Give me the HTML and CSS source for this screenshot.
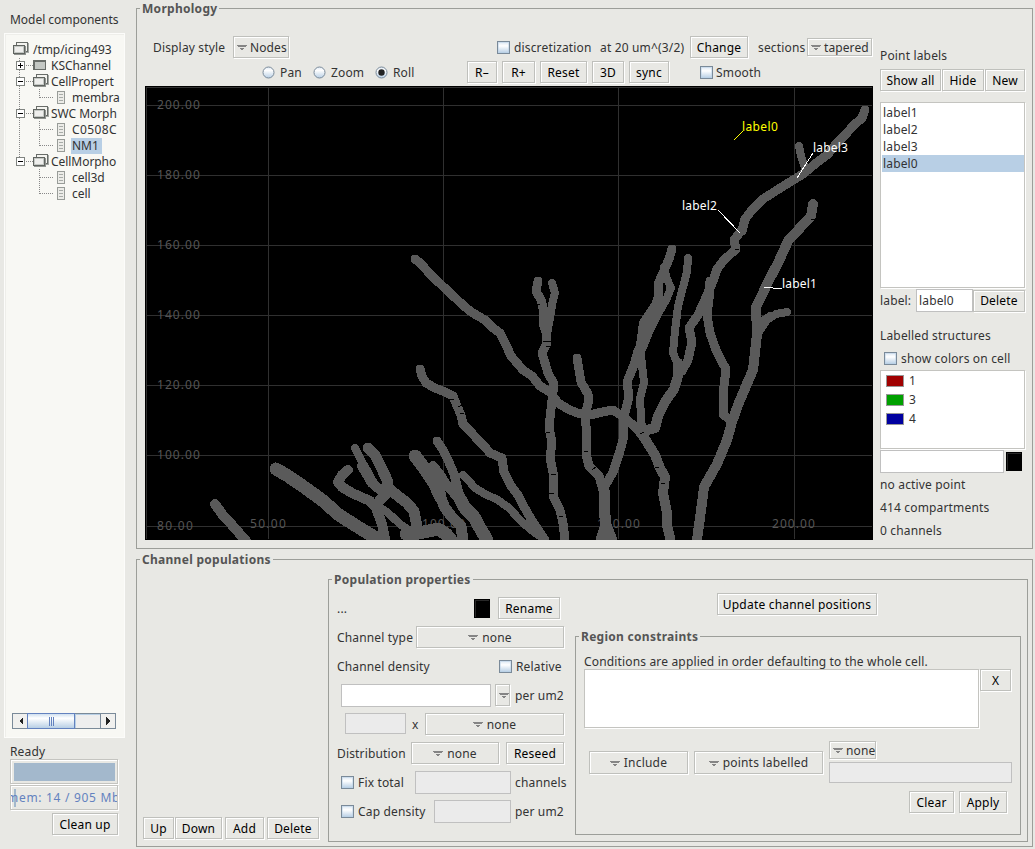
FILE: index.html
```html
<!DOCTYPE html>
<html lang="en">
<head>
<meta charset="utf-8">
<title>Morphology</title>
<link rel="stylesheet" href="styles.css">
</head>
<body>
<svg width="0" height="0" class="defs" aria-hidden="true">
  <defs>
    <linearGradient id="metal" x1="0" y1="0" x2="0" y2="1"><stop offset="0" stop-color="#dde8f3"/><stop offset=".3" stop-color="#fff"/><stop offset="1" stop-color="#b8cfe5"/></linearGradient>
    <symbol id="folder" viewBox="0 0 16 14"><path d="M3.500 3V.5h11v9H12" fill="#f4f4f0" stroke="#686c68"/><path d="M15.500 1v9.500H13" fill="none" stroke="#a4a8a4"/><path d="M.5 3.500h11v8H.5z" fill="#eeeeec" stroke="#606460"/><path d="M1.500 4.500h9v6h-9z" fill="none" stroke="#c4c8c4"/><path d="M12.500 4v8.500H1" fill="none" stroke="#909490"/></symbol>
    <symbol id="closed" viewBox="0 0 14 11"><path d="M1 1h11.500v8.500H1z" fill="#c4c8c4" stroke="#686c68" stroke-width="1.500"/></symbol>
    <symbol id="leaf" viewBox="0 0 9 13"><path d="M.5.5h7v12h-7z" fill="#ecece8" stroke="#989c98"/><path d="M2 3.500h4M2 6.500h4M2 9.500h4" stroke="#a8aca8"/></symbol>
    <symbol id="plus" viewBox="0 0 9 9"><path d="M.5.5h8v8h-8z" fill="#fff" stroke="#808480"/><path d="M2 4.500h5M4.500 2v5" stroke="#000"/></symbol>
    <symbol id="minus" viewBox="0 0 9 9"><path d="M.5.5h8v8h-8z" fill="#fff" stroke="#808480"/><path d="M2 4.500h5" stroke="#000"/></symbol>
    <symbol id="arrow" viewBox="0 0 10 5"><path d="M0 0h10v1H9v1H1V1H0zM3 3h4v1H6v1H4V4H3z" fill="#858585"/></symbol>
    <symbol id="radio" viewBox="0 0 13 13"><circle cx="6.500" cy="6.500" r="5.500" fill="url(#metal)" stroke="#7a8a99"/></symbol>
  </defs>
</svg>
<div class="app">
  <aside class="side">
    <div class="side-title">Model components</div>
    <div class="tree-panel">
      <div class="tree">
        <svg class="lines" width="50" height="154" viewBox="0 0 50 154"><path d="M7.500 16v104M14 23.500h7M14 39.500h7M14 71.500h7M14 119.500h7M27.500 47v10M27.500 55.500h14M27.500 79v26M27.500 87.500h14M27.500 103.500h14M27.500 127v26M27.500 135.500h14M27.500 151.500h14" /></svg>
        <div class="node"><svg class="folder"><use href="#folder"/></svg><span>/tmp/icing493</span></div>
        <div class="node l1"><svg class="box"><use href="#plus"/></svg><svg class="closed"><use href="#closed"/></svg><span>KSChannel</span></div>
        <div class="node l1"><svg class="box"><use href="#minus"/></svg><svg class="folder"><use href="#folder"/></svg><span>CellPropert</span></div>
        <div class="node l2"><svg class="leaf"><use href="#leaf"/></svg><span>membra</span></div>
        <div class="node l1"><svg class="box"><use href="#minus"/></svg><svg class="folder"><use href="#folder"/></svg><span>SWC Morph</span></div>
        <div class="node l2"><svg class="leaf"><use href="#leaf"/></svg><span class="wide">C0508C</span></div>
        <div class="node l2"><svg class="leaf"><use href="#leaf"/></svg><span class="picked">NM1</span></div>
        <div class="node l1"><svg class="box"><use href="#minus"/></svg><svg class="folder"><use href="#folder"/></svg><span>CellMorpho</span></div>
        <div class="node l2"><svg class="leaf"><use href="#leaf"/></svg><span>cell3d</span></div>
        <div class="node l2"><svg class="leaf"><use href="#leaf"/></svg><span>cell</span></div>
      </div>
      <div class="scroll"><span class="sb"><svg width="5" height="8"><path d="M5 0v8L1 4z"/></svg></span><span class="thumb"><i></i><i></i><i></i></span><span class="track"></span><span class="sb"><svg width="5" height="8"><path d="M0 0v8l4-4z"/></svg></span></div>
    </div>
    <div class="ready">Ready</div>
    <div class="meter"><div class="full"></div></div>
    <div class="meter mem"><div class="bit"></div><span>mem: 14 / 905 Mb</span></div>
    <div class="btn cleanup">Clean up</div>
  </aside>
  <main class="main">
    <section class="group morph">
      <h2 class="legend">Morphology</h2>
      <div class="morph-body">
        <div class="view">
          <div class="row bar1">
            <span>Display style</span><div class="btn menu tight w56"><svg class="arrow"><use href="#arrow"/></svg>Nodes</div>
            <i class="check"></i><span>discretization</span><span>at 20 um^(3/2)</span><div class="btn w58">Change</div><span>sections</span><div class="btn menu tight short w65"><svg class="arrow"><use href="#arrow"/></svg>tapered</div>
          </div>
          <div class="row bar2">
            <svg class="radio"><use href="#radio"/></svg><span>Pan</span><svg class="radio"><use href="#radio"/></svg><span>Zoom</span><svg class="radio"><use href="#radio"/><circle cx="6.500" cy="6.500" r="3.200" fill="#222"/></svg><span>Roll</span>
            <div class="btn w30">R–</div><div class="btn w33">R+</div><div class="btn w47">Reset</div><div class="btn w32">3D</div><div class="btn w40">sync</div><i class="check"></i><span>Smooth</span>
          </div>
          <svg class="canvas" viewBox="145 86 728 454" width="728" height="454">
            <path d="M145 86h728v454H145z"/>
            <path class="grid" d="M146.500 539V87.500H872M268.500 88v451M443.500 88v451M618.500 88v451M794.500 88v451M147 105.500h725M147 175.500h725M147 245.500h725M147 315.500h725M147 385.500h725M147 455.500h725M147 526.500h725"/>
            <g class="tick">
              <text x="157" y="109" textLength="43">200.00</text><text x="157" y="179" textLength="43">180.00</text><text x="157" y="249" textLength="43">160.00</text><text x="157" y="319" textLength="43">140.00</text><text x="157" y="389" textLength="43">120.00</text><text x="157" y="459" textLength="43">100.00</text><text x="157" y="530" textLength="36">80.00</text>
              <text x="250" y="528" textLength="36">50.00</text><text x="422" y="528" textLength="43">100.00</text><text x="597" y="528" textLength="43">150.00</text><text x="772" y="528" textLength="43">200.00</text>
            </g>
            <g class="cell">
              <path d="M415 259L420 263L432 276L450 293L465 307L473 313L485 320L493 328L500 333L506 345L511 356L523 370L532 376L540 386L550 392L558 403L568 409L577 413L590 415L602 412L613 410L622 416L633 425L643 435"/>
              <path class="w9" d="M638 429L645 439L655 455L660 468L665 477L663 493L667 513L667 525L670 538"/>
              <path d="M420 369L422 376L426 383L435 388L445 392L453 396L457 406L461 415L463 424L470 431L478 440L485 447L490 453L502 458L504 472L511 486L518 495L523 505L531 519L545 540"/>
              <path class="w7" d="M463 475L468 480L475 488L485 494L498 500L509 508L520 520L530 529L545 540"/>
              <path d="M437 441L443 450L448 460L454 474L457 486L462 503"/>
              <path class="w12" d="M460 499L465 508L474 517L480 528L487 540"/>
              <path class="w9" d="M433 466L440 475L445 483L454 493L463 504"/>
              <path class="w12" d="M415 456L422 465L435 484L440 496"/>
              <path class="w10" d="M435 484L440 496L445 508L452 517L461 526L463 540"/>
              <path class="w12" d="M276 469L288 476L304 487L322 500L339 515L358 527L376 538"/>
              <path class="w9" d="M215 504L222 514L232 525L246 541"/>
              <path class="w7" d="M355 448L361 460L368 472L375 485L383 494"/>
              <path class="w10" d="M368 448L375 455L382 469L388 482L387 493L380 500"/>
              <path class="w9" d="M362 466L372 483L383 492"/>
              <path class="w9" d="M348 470L342 475L338 482L342 487L352 493L370 501L376 508L382 524L385 539"/>
              <path class="w10" d="M388 488L398 496L407 503L414 511L417 527"/>
              <path class="w7" d="M376 505L387 512L400 524L413 533"/>
              <path class="w12" d="M406 534L419 533L438 529L446 534L451 540"/>
              <path d="M538 281L536 291L541 300L544 312L543 323L546 332L547 343L542 353L548 373L554 384L552 400L549 427L552 443L550 457L554 477L553 496L560 510L563 523L565 540"/>
              <path class="w7" d="M552 283L555 293L552 305L550 318L547 334"/>
              <path d="M577 358L579 370L581 382L588 394L588 404L585 415L587 437L586 454L589 466L599 476L603 490L604 509"/>
              <path class="w10" d="M604 490L604 506L606 525L601 540M604 510L606 525L612 540"/>
              <path d="M672 249L669 259L663 273L658 284L658 298L650 324L645 338L638 351L634 365L627 382L629 396L624 417L623 440L619 454L613 472L605 486"/>
              <path class="w7" d="M664 267L667 279L671 288L666 300L658 314L650 330L641 352"/>
              <path class="w7" d="M656 303L643 323L640 345L642 365L644 382L640 399L641 416L642 430"/>
              <path class="w7" d="M688 258L687 272L683 287L678 306L675 331L673 353L678 365"/>
              <path class="w9" d="M678 363L678 376L674 389L665 402L658 416L655 428L643 431"/>
              <path d="M865 110L862 118L854 125L844 136L836 144L828 154L815 164L803 174L785 185L763 199L752 210L745 219L742 231"/>
              <path d="M741 231L734 240L736 249L724 260L717 269L713 281L704 302L698 315L689 328L692 342L688 360L682 371"/>
              <path class="w7" d="M799 146L801 156L805 168"/>
              <path d="M710 281L709 299L707 315L710 333L716 350L722 362L726 369L724 386L723 414L731 421"/>
              <path class="w9" d="M813 204L811 216L800 228L788 241L778 263L768 282L761 297L756 307L757 334L753 370L746 386L738 405L732 422L727 440L717 464L704 487L702 503L697 540"/>
              <path class="w7" d="M787 312L776 314L767 320L759 332M770 316L759 324"/>
            </g>
            <path class="nick" d="M543 341h8M546 346h5M536 304h4M546 432h4M551 474h5M549 493h5M559 516h4M584 451h4M592 470l4-3M655 467h4M661 483h4M735 249h4M811 219h4M640 434l4-2M533 364h4M450 399h4M458 407l4-2M460 413h4"/>
            <path class="lead" d="M764 287.500h9M773 288.500h9M718 210L740 233M813 153L797 178"/>
            <path class="lead yellow" d="M743 131L734 140"/>
            <g class="mark"><text x="782" y="288" textLength="35">label1</text><text x="682" y="210" textLength="35">label2</text><text x="813" y="152" textLength="35">label3</text><text class="yellow" x="742" y="131" textLength="36">label0</text></g>
          </svg>
        </div>
        <div class="props">
          <div class="line t1">Point labels</div>
          <div class="row three"><div class="btn">Show all</div><div class="btn">Hide</div><div class="btn">New</div></div>
          <div class="list points"><div>label1</div><div>label2</div><div>label3</div><div class="sel">label0</div></div>
          <div class="row edit"><span>label:</span><div class="field">label0</div><div class="btn">Delete</div></div>
          <div class="line t2">Labelled structures</div>
          <div class="row colors"><i class="check"></i><span>show colors on cell</span></div>
          <div class="list swatches"><div><i class="red"></i>1</div><div><i class="green"></i>3</div><div><i class="blue"></i>4</div></div>
          <div class="row pick"><div class="field"></div><i class="black"></i></div>
          <div class="line">no active point</div><div class="line">414 compartments</div><div class="line">0 channels</div>
        </div>
      </div>
    </section>
    <section class="group chan">
      <h2 class="legend">Channel populations</h2>
      <div class="chan-body">
        <div class="row actions"><div class="btn w31">Up</div><div class="btn w47">Down</div><div class="btn w39">Add</div><div class="btn w52">Delete</div></div>
        <section class="group pop">
          <h2 class="legend">Population properties</h2>
          <div class="pop-body">
            <div class="form">
              <div class="row f1"><span>...</span><i class="black"></i><div class="btn">Rename</div></div>
              <div class="row f2"><span>Channel type</span><div class="btn menu"><svg class="arrow"><use href="#arrow"/></svg>none</div></div>
              <div class="row f3"><span>Channel density</span><i class="check"></i><span>Relative</span></div>
              <div class="row f4"><div class="field"></div><div class="btn menu tight w15"><svg class="arrow"><use href="#arrow"/></svg></div><span>per um2</span></div>
              <div class="row f5"><div class="field off"></div><span>x</span><div class="btn menu"><svg class="arrow"><use href="#arrow"/></svg>none</div></div>
              <div class="row f6"><span>Distribution</span><div class="btn menu w88"><svg class="arrow"><use href="#arrow"/></svg>none</div><div class="btn">Reseed</div></div>
              <div class="row f7"><i class="check"></i><span>Fix total</span><div class="field off w96"></div><span>channels</span></div>
              <div class="row f8"><i class="check"></i><span>Cap density</span><div class="field off w77"></div><span>per um2</span></div>
            </div>
            <div class="region-col">
              <div class="btn update">Update channel positions</div>
              <section class="group region">
                <h2 class="legend">Region constraints</h2>
                <div class="line cond">Conditions are applied in order defaulting to the whole cell.</div>
                <div class="conds"><div class="list"></div><div class="btn">X</div></div>
                <div class="filters">
                  <div class="btn menu tall w99"><svg class="arrow"><use href="#arrow"/></svg>Include</div>
                  <div class="btn menu tall w129"><svg class="arrow"><use href="#arrow"/></svg>points labelled</div>
                  <div class="target"><div class="btn menu tight short w47"><svg class="arrow"><use href="#arrow"/></svg>none</div><div class="field off"></div></div>
                </div>
                <div class="final"><div class="btn w45">Clear</div><div class="btn w48">Apply</div></div>
              </section>
            </div>
          </div>
        </section>
      </div>
    </section>
  </main>
</div>
</body>
</html>
```
FILE: styles.css
```css
* { box-sizing: border-box; }
body { margin: 0; background: #e8e8e4; color: #333; font: 12px/16px "Noto Sans", "Open Sans", sans-serif; letter-spacing: .16px; white-space: nowrap; }
svg { display: block; flex: none; shape-rendering: crispEdges; }
i { display: block; flex: none; }
.defs { position: absolute; }
.app { display: flex; width: 1035px; height: 849px; overflow: hidden; }

.btn { display: flex; align-items: center; justify-content: center; height: 22px; padding-top: 1px; border: 1px solid #bfc0bc; box-shadow: inset 1px 1px #fff, 1px 1px #fff; color: #000; letter-spacing: .2px; flex: none; }
.menu { color: #333; gap: 4px; }
.tight { justify-content: flex-start; padding-left: 3px; gap: 3px; letter-spacing: .1px; }
.short { height: 18px; }
.tall { height: 23px; }
.arrow { width: 10px; height: 5px; }
.field { height: 23px; background: #fff; border: 1px solid #c0c0c0; padding: 3px 2px; }
.off { background: #ebebeb; height: 21px; }
.list { background: #fff; border: 1px solid #c4c4c0; box-shadow: 1px 1px #fff; }
.check { width: 13px; height: 13px; border: 1px solid #7a8a99; background: linear-gradient(#dde8f3, #fff 35%, #b8cfe5); box-shadow: inset 0 0 0 1px rgba(184, 207, 229, .5); }
.black { width: 16px; height: 19px; background: #000; border: 1px solid #000; box-shadow: inset 1px 1px #282828; }
.row { display: grid; align-items: center; }
.line { height: 23px; line-height: 23px; }
.w15 { width: 15px; } .w30 { width: 30px; } .w31 { width: 31px; } .w32 { width: 32px; } .w33 { width: 33px; } .w39 { width: 39px; } .w40 { width: 40px; } .w45 { width: 45px; } .w47 { width: 47px; } .w48 { width: 48px; } .w52 { width: 52px; } .w56 { width: 56px; } .w58 { width: 58px; } .w65 { width: 65px; } .w77 { width: 77px; } .w88 { width: 88px; } .w96 { width: 96px; } .w99 { width: 99px; } .w129 { width: 129px; }

.side { width: 136px; flex: none; display: flex; flex-direction: column; padding: 12px 0 0 4px; }
.side-title { height: 21px; padding-left: 6px; letter-spacing: -.04px; }
.tree-panel { width: 121px; height: 705px; background: #f8f8f4; border: 1px solid #fcfcfa; box-shadow: inset 1px 1px #eeeeea; display: flex; flex-direction: column; justify-content: space-between; padding: 8px 8px 8px 7px; }
.tree { position: relative; width: 107px; letter-spacing: -.05px; }
.lines { position: absolute; left: 0; top: 0; fill: none; stroke: #888; stroke-dasharray: 1 1; }
.node { position: relative; display: flex; align-items: center; height: 16px; padding-left: 1px; }
.node span { margin-left: 4px; }
.l1 { padding-left: 4px; }
.node.l1 span { margin-left: 2px; }
.l2 { padding-left: 45px; }
.node.l2 span { margin-left: 6px; }
.folder { width: 16px; height: 14px; margin-bottom: 2px; }
.box { width: 9px; height: 9px; margin-right: 8px; margin-bottom: 1px; }
.closed { width: 14px; height: 11px; margin-right: 2px; margin-bottom: 1px; }
.leaf { width: 9px; height: 13px; margin-bottom: 1px; }
.node .wide { letter-spacing: .4px; }
.node.l2 .picked { background: #b8cfe5; padding: 0 3px 0 1px; margin-left: 5px; }
.scroll { display: flex; width: 104px; height: 16px; border: 1px solid #7a8a99; }
.sb { width: 14px; display: flex; align-items: center; justify-content: center; background: #f0f0ee; fill: #222; }
.thumb { width: 48px; margin: -1px 0; border: 1px solid #6382bf; background: linear-gradient(#d0e0f0, #fff 30%, #b8cfe5); display: flex; gap: 1px; align-items: center; justify-content: center; }
.thumb i { width: 1px; height: 9px; background: #6382bf; }
.track { width: 26px; background: #eee; border-right: 1px solid #7a8a99; box-shadow: inset 1px 1px #b8cfe5; }
.ready { padding: 6px 0 0 6px; height: 21px; }
.meter { margin-left: 6px; width: 108px; height: 25px; border: 1px solid #c4c4c0; box-shadow: inset 1px 1px #fff, 1px 1px #fff; padding: 3px; overflow: hidden; flex: none; }
.full { height: 18px; width: 101px; background: #a3b8cc; }
.mem { margin-top: 1px; display: flex; align-items: center; color: #6382bf; padding: 0; letter-spacing: .7px; }
.bit { width: 2px; height: 18px; margin-left: 3px; background: #a3b8cc; flex: none; }
.mem span { margin-left: -9px; }
.cleanup { margin: 3px 0 0 48px; width: 66px; }

.main { flex: 1; padding-top: 8px; }
.group { display: flex; flex-direction: column; border: 1px solid #9c9e99; }
.legend { margin: -8px 0 0 3px; padding: 0 2px; height: 16px; width: max-content; background: #e8e8e4; font-size: 12px; line-height: 16px; font-weight: 700; letter-spacing: .28px; color: #555; flex: none; }
.morph { width: 897px; height: 541px; }
.morph-body { display: flex; }
.view { width: 743px; padding: 19px 0 0 8px; flex: none; }
.view .row span { padding-top: 2px; }
.bar1 { padding-left: 8px; height: 22px; grid-template-columns: 80px 264px 17px 86px 90px 68px 49px 65px; }
.bar2 { padding-left: 117px; height: 22px; margin-top: 3px; margin-bottom: 3px; grid-template-columns: 18px 33px 18px 44px 18px 74px 35px 38px 52px 37px 71px 16px 40px; }
.radio { width: 13px; height: 13px; shape-rendering: auto; }
.canvas { display: block; shape-rendering: crispEdges; }
.grid { fill: none; stroke: #303030; }
.canvas text { font-size: 12px; }
.tick { fill: #555; }
.mark { fill: #fff; }
.mark .yellow { fill: #ff0; }
.cell path { fill: none; stroke: #5a5a5a; stroke-width: 9px; stroke-linecap: round; stroke-linejoin: round; }
.cell .w7 { stroke-width: 8px; } .cell .w9 { stroke-width: 10px; } .cell .w10 { stroke-width: 11px; } .cell .w12 { stroke-width: 13px; }
.nick { fill: none; stroke: #000; }
.lead { fill: none; stroke: #fff; }
.lead.yellow { stroke: #ff0; }
.props { width: 145px; padding-top: 28px; }
.t1 { height: 24px; line-height: 22px; }
.three { grid-template-columns: 61px 42px 40px; column-gap: 1px; }
.points { height: 186px; margin-top: 11px; padding: 1px 0 0 1px; line-height: 17px; }
.points div { padding-left: 1px; }
.points .sel { background: #b8cfe5; }
.edit { margin-top: 1px; height: 23px; grid-template-columns: 36px 57px 52px; }
.t2 { margin-top: 12px; }
.colors { height: 23px; padding-left: 4px; grid-template-columns: 17px 120px; }
.swatches { height: 79px; padding: 0 5px; }
.swatches div { display: flex; align-items: center; gap: 5px; height: 19px; }
.swatches i { width: 18px; height: 12px; border: 1px solid #989898; }
.red { background: #a00000; } .green { background: #00a000; } .blue { background: #0000a0; }
.pick { margin-top: 1px; grid-template-columns: 124px 16px; column-gap: 2px; }

.chan { width: 897px; height: 288px; margin-top: 10px; }
.chan-body { display: flex; }
.actions { width: 191px; flex: none; padding: 249px 0 0 6px; align-items: start; grid-template-columns: 32px 50px 42px 52px; }
.pop { width: 700px; height: 263px; margin-top: 11px; }
.pop-body { display: flex; }
.form { width: 246px; padding: 6px 0 0 8px; }
.form .row { height: 29px; }
.form .btn { margin-bottom: 1px; }
.f1 { grid-template-columns: 137px 24px 62px; }
.f2 { grid-template-columns: 79px 148px; }
.f3 { grid-template-columns: 162px 17px 50px; }
.f4 { padding-left: 4px; grid-template-columns: 150px 15px 50px; column-gap: 4px; }
.f4 span { padding-left: 1px; }
.f5 { padding-left: 8px; grid-template-columns: 61px 7px 139px; column-gap: 6px; }
.f5 .field { margin-bottom: 2px; }
.f6 { grid-template-columns: 74px 95px 58px; }
.f7 { padding-left: 4px; grid-template-columns: 17px 57px 100px 50px; }
.f8 { padding-left: 4px; grid-template-columns: 17px 76px 81px 50px; }
.f7 .field, .f8 .field { height: 23px; }
.region-col { padding-top: 5px; }
.update { width: 160px; margin-left: 142px; }
.region { width: 446px; height: 199px; margin-top: 21px; }
.cond { margin-left: 8px; height: 24px; line-height: 33px; }
.conds { display: flex; gap: 1px; margin-left: 8px; height: 59px; }
.conds .list { width: 395px; }
.conds .btn { width: 31px; }
.filters { display: flex; gap: 6px; margin: 13px 0 0 13px; }
.filters .tall { margin-top: 10px; }
.target { display: flex; flex-direction: column; gap: 3px; }
.target .field { width: 183px; }
.final { display: flex; gap: 5px; margin: 8px 0 0 333px; }
```
